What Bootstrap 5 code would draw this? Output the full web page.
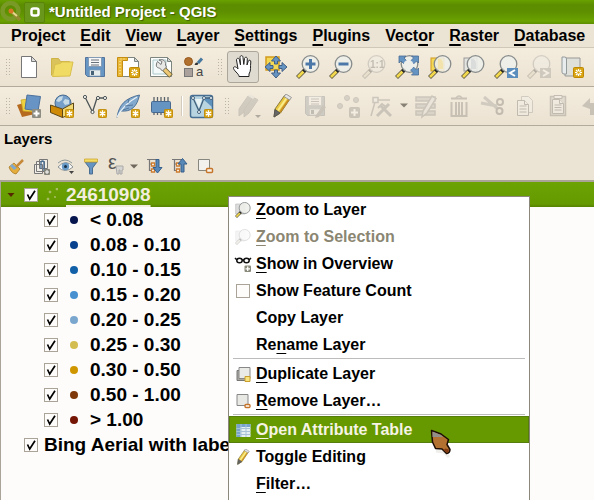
<!DOCTYPE html>
<html lang="en">
<head>
<meta charset="utf-8">
<meta name="viewport" content="width=device-width, initial-scale=1">
<title>*Untitled Project - QGIS</title>
<link rel="stylesheet" href="https://cdn.jsdelivr.net/npm/bootstrap@5.3.0/dist/css/bootstrap.min.css">
<style>
  body { font-family: "Liberation Sans", Arial, sans-serif; font-weight: 700; font-size: 16px; line-height: 20px; color: #000; background: #ebe3d3; }
  u { text-decoration-skip-ink: none; text-decoration-thickness: 1px; text-underline-offset: 3px; }
  button { font: inherit; color: inherit; background: none; border: 0; }
  .titlebar { height: 24px; background: linear-gradient(#6aa200 0, #5c8c00 5px, #5e8f00 12px, #6ba300 21px, #5d8c00 24px); color: #fff; font-size: 15px; text-shadow: 1px 1px 1px #3d5c00; }
  .winbtn { width: 21px; height: 21px; background: #69971b; border: 1px solid #5a8407; border-radius: 2px; margin-left: 1px; }
  .menubar { height: 24px; padding-left: 11px; gap: 15px; border-bottom: 1px solid #cfc8b9; }
  .menubar u { text-decoration-thickness: 2px; }
  .toolstrip { height: 39px; background: linear-gradient(#f4ecdd, #ebe2d2); border-bottom: 1px solid #b2aa9c; }
  .strip-b { padding-bottom: 1px; }
  .tool { width: 33px; height: 32px; padding: 0 5px 0 4px; flex: none; }
  .tool.pressed { padding-left: 3px; padding-right: 4px; width: 32px; margin-left: 1px; background: #dfdbd0; border: 1px solid #aaa69a; border-radius: 3px; }
  .tool svg { display: block; overflow: visible; }
  .grip { flex: none; height: 18px; width: 5px; margin: 0 3px 0 5px; background: radial-gradient(circle, #bbb3a5 1px, transparent 1px) 0 0 / 3px 3px; }
  .grip.mid { margin: 0 4px 0 6px; }
  .divider { flex: none; width: 2px; height: 20px; margin: 0 2px 0 3px; background: #d3cbbc; border-right: 1px solid #fff; }
  .arrow { flex: none; width: 12px; padding: 0; }
  .arrow svg { display: block; margin: 0 auto; }
  .off { opacity: .3; filter: grayscale(.8); }
  .panel-name { font-size: 15px; line-height: 20px; padding: 3px 4px 2px; margin: 0; font-weight: 700; }
  .panel-tools { height: 29px; padding-left: 7px; gap: 7px; }
  .panel-tools button { width: 18px; height: 18px; padding: 0; flex: none; }
  .panel-tools .arrow { width: 12px; margin: 0 -1px 0 -4px; padding-top: 2px; }
  .panel-tools svg { display: block; overflow: visible; }
  .tree { background: #fdfcfa; border-top: 2px solid #aaa498; border-left: 1px solid #aaa498; font-size: 19px; line-height: 25px; }
  .tree-row { height: 25px; padding-left: 43px; white-space: nowrap; }
  .tree-row.top { padding-left: 23px; gap: 6px; }
  .tree-row.picked { padding-left: 5px; color: #f2eede; background: linear-gradient(#6ca303, #659a00 22px, #558100 25px); }
  .tree-row.picked u { text-decoration-thickness: 2px; text-underline-offset: 4px; }
  .tick { appearance: none; -webkit-appearance: none; flex: none; width: 14px; height: 14px; margin: 0; background: #fdfcfa no-repeat center / 12px 12px; border: 1px solid #aaa498; }
  .tick:checked { background-image: url("data:image/svg+xml,%3Csvg xmlns='http://www.w3.org/2000/svg' viewBox='0 0 12 12'%3E%3Cpath d='M2.5 5.5 4.7 10 10 1.8' fill='none' stroke='%23000' stroke-width='1.7'/%3E%3C/svg%3E"); }
  .dot { flex: none; width: 8px; height: 8px; border-radius: 50%; margin: 0 12px; }
  .d1 { background: #06154e; } .d2 { background: #08418e; } .d3 { background: #1160a8; } .d4 { background: #4890cf; } .d5 { background: #7ba7cf; }
  .d6 { background: #d3bd51; } .d7 { background: #cf9600; } .d8 { background: #7f380a; } .d9 { background: #741505; }
  .context { position: absolute; left: 228px; top: 196px; bottom: -4px; width: 302px; background: #fff; border: 1px solid #8b877b; }
  .entry { height: 27px; padding: 0 6px; gap: 5px; text-align: left; white-space: nowrap; cursor: default; }
  .entry:first-child { height: 26px; }
  .entry.gone { color: #8b8672; }
  .entry.hot { color: #f6f4e4; background: #669900; outline: 1px solid #557e0c; outline-offset: -1px; }
  .entry svg, .pic { flex: none; width: 16px; height: 16px; overflow: visible; }
  .entry .tick { margin: 0 1px; }
  .rule { height: 1px; background: #bdbcba; margin: 0 4px 1px; }
  .pointer { position: absolute; left: 430px; top: 429px; }
</style>
<script src="https://cdn.jsdelivr.net/npm/bootstrap@5.3.0/dist/js/bootstrap.bundle.min.js"></script>
</head>
<body>
<svg class="d-none" aria-hidden="true">
  <symbol id="star" viewBox="0 0 10 10"><rect x=".5" y=".5" width="9" height="9" rx="1" fill="#d9a514" stroke="#bf8800"/><path d="M5 1.5v7M2 3.2l6 3.6M8 3.2 2 6.8" stroke="#fff" stroke-width="1.4"/></symbol>
  <symbol id="lens" viewBox="0 0 24 24"><path d="M9 15 1.5 22.5" stroke="#5d5843" stroke-width="4.2"/><path d="M7.5 16.5 2 22" stroke="#f2d84c" stroke-width="2.6"/><path d="M10 14 7.500 16.500" stroke="#222" stroke-width="3.500"/><circle cx="14.500" cy="9" r="8.300" fill="#eeefeb" fill-opacity=".88" stroke="#868b8b" stroke-width="1.300"/></symbol>
  <symbol id="down" viewBox="0 0 8 5"><path d="M0 .5h8L4 4.500z" fill="#6d675d"/></symbol>
  <symbol id="pencil" viewBox="0 0 24 24"><path d="M5 15 14.500 1.500 20 5 10.500 19 4 23z" fill="#e9c740" stroke="#8b7a3c"/><path d="M8 16.500 17 3.500" stroke="#f9ec8c" stroke-width="2"/><path d="M10 18 19 5" stroke="#c98c23" stroke-width="1.500"/><path d="M14 2.500 16 0 21.500 3.500 19.500 6z" fill="#e4e4e4" stroke="#888" stroke-width=".8"/><path d="M5 15.500 10 19 4 23z" fill="#666" stroke="#555"/></symbol>
  <symbol id="floppy" viewBox="0 0 24 24"><path d="M2.500 2.500h19v19H4.500l-2-2z" fill="#6796c4" stroke="#54749b"/><path d="M5.500 2.500h13v9h-13z" fill="#f7f7f7" stroke="#839bb5"/><path d="M8 5h8M8 7.500h8M8 10h8" stroke="#69717a"/><path d="M6.500 15h11v6h-11z" fill="#e6ecec" stroke="#839bb5" stroke-width=".7"/><path d="M8 16h3v4H8z" fill="#476277"/></symbol>
</svg>
<div class="vh-100 d-flex flex-column overflow-hidden position-relative">
  <header class="titlebar d-flex align-items-center flex-shrink-0">
    <svg width="23" height="24" viewBox="0 0 23 24" aria-hidden="true"><circle cx="10.500" cy="11" r="8" fill="none" stroke="#7a9a27" stroke-width="4.500"/><path d="m12 12 8 8" stroke="#928b30" stroke-width="3.500"/><path d="m11 11 6 5" stroke="#e3d98d" stroke-width="2"/><circle cx="11" cy="11" r="2.500" fill="#d77924"/></svg>
    <button type="button" class="winbtn p-0 d-flex align-items-center justify-content-center" aria-label="Window menu"><svg width="12" height="12" viewBox="0 0 12 12"><rect x="2.500" y="2.500" width="7" height="7" rx="2" fill="none" stroke="#fff" stroke-width="2.500"/></svg></button>
    <span class="ms-1 text-nowrap">*Untitled Project - QGIS</span>
  </header>
  <nav class="menubar d-flex align-items-center flex-shrink-0" aria-label="Main menu">
    <button type="button" class="p-0">Pro<u>j</u>ect</button><button type="button" class="p-0"><u>E</u>dit</button><button type="button" class="p-0"><u>V</u>iew</button><button type="button" class="p-0"><u>L</u>ayer</button><button type="button" class="p-0"><u>S</u>ettings</button><button type="button" class="p-0"><u>P</u>lugins</button><button type="button" class="p-0">Vect<u>o</u>r</button><button type="button" class="p-0"><u>R</u>aster</button><button type="button" class="p-0"><u>D</u>atabase</button>
  </nav>

  <div class="toolstrip d-flex align-items-center flex-shrink-0" role="toolbar" aria-label="Project and navigation">
    <span class="grip"></span>
    <button type="button" class="tool" aria-label="New project"><svg width="24" height="24" viewBox="0 0 24 24"><path d="M4.500 1.500h10l5 5v16h-15z" fill="#fff" stroke="#777"/><path d="M14.500 1.500v5h5z" fill="#ddd" stroke="#777"/></svg></button>
    <button type="button" class="tool" aria-label="Open project"><svg width="24" height="24" viewBox="0 0 24 24"><path d="M1.500 20.500V3.500h7l2 3h9v3" fill="#dbc35c" stroke="#ceb347"/><path d="M2.500 21.500 5 9.500l5-1 2-1.500h11l-3 14z" fill="#f0dc65" stroke="#d9bf4c"/></svg></button>
    <button type="button" class="tool" aria-label="Save project"><svg width="24" height="24"><use href="#floppy"/></svg></button>
    <button type="button" class="tool" aria-label="New print layout"><svg width="24" height="24" viewBox="0 0 24 24"><path d="M2.500 2.500h16l4 4v15h-20z" fill="#fdfdfb" stroke="#7d8580"/><path d="M18.500 2.500v4h4z" fill="#d6d6d6" stroke="#7d8580"/><path d="M1.500 2.500h10v3h-5v16h-5z" fill="#ebb93a" stroke="#c58e12"/><path d="M4 6v14M5 3.500v1.500M8 3.500v1.500" stroke="#fff2bd" stroke-dasharray="1 2"/><rect x="13.500" y="12.500" width="10" height="10" rx="1" fill="#d9a514" stroke="#bf8800"/><path d="M18.500 14v7M15 17.500h7M16 15l5 5M21 15l-5 5" stroke="#fff" stroke-width="1.200"/><circle cx="18.500" cy="17.500" r="1.300" fill="#d9a514"/></svg></button>
    <button type="button" class="tool" aria-label="Layout manager"><svg width="24" height="24" viewBox="0 0 24 24"><path d="M1.500 2.500h17l4 4v15h-21z" fill="#fdfdfb" stroke="#7d8580"/><path d="M18.500 2.500v4h4z" fill="#d6d6d6" stroke="#7d8580"/><path d="M4 5h13v14H4z" fill="#f4fafa" stroke="#a9c8ca"/><path d="m14 13 8 8" stroke="#6c6039" stroke-width="5"/><path d="m15 14 6.500 6.500" stroke="#eec875" stroke-width="3.200"/><path d="m8.500 6.500 3.500 3 1-3-3-1.500c4-1.500 7 1 6.500 5l1 2-4 4-3-3C7 13 6.500 10 8.500 6.500z" fill="#e8e8e6" stroke="#777"/></svg></button>
    <button type="button" class="tool" aria-label="Style manager"><svg width="24" height="24" viewBox="0 0 24 24"><circle cx="6.500" cy="6.500" r="4" fill="#b2702e" stroke="#95571a"/><rect x="2.500" y="13.500" width="8" height="8" fill="#aaa19c" stroke="#777"/><path d="M12.500 10c1-3 2-3 4-2l-1 2z" fill="#333"/><path d="m16 8 4-4.500" stroke="#47789f" stroke-width="3"/><text x="14" y="21" font-size="13" font-weight="400" fill="#444">a</text></svg></button>
    <span class="grip mid"></span>
    <button type="button" class="tool pressed" aria-label="Pan map" aria-pressed="true"><svg width="24" height="24" viewBox="0 0 24 24"><path d="M8 21.500c0-3-6-6-5.500-9 1-1.500 3-.5 4.500 1.500L5.500 5c0-2 2.500-2.500 3 0l1 5L9 2.500c0-2.500 3-2.500 3 0l.8 7 .7-6c.5-2 3-1.500 2.800.5L16 10l1.300-4c.7-1.500 2.800-1 2.500 1-.8 5 .7 8-1.800 12v2.500z" fill="#fff" stroke="#222" stroke-linejoin="round"/></svg></button>
    <button type="button" class="tool" aria-label="Pan to selection"><svg width="24" height="24" viewBox="0 0 24 24"><rect x="3" y="2" width="13" height="13" fill="#f4d957" stroke="#d29a1c" stroke-width="1.500"/><path d="m13 1 4.500 5h-3v3h-3V6h-3zM13 23l4.500-5h-3v-3h-3v3h-3zM2 12l5-4.500v3h3v3H7v3zM24 12l-5-4.500v3h-3v3h3v3z" fill="#6694c2" stroke="#415f84"/></svg></button>
    <button type="button" class="tool" aria-label="Zoom in"><svg width="24" height="24"><use href="#lens"/><path d="M14.500 4v10M9.500 9h10" stroke="#4b78a8" stroke-width="3"/></svg></button>
    <button type="button" class="tool" aria-label="Zoom out"><svg width="24" height="24"><use href="#lens"/><path d="M9.500 9h10" stroke="#4b78a8" stroke-width="3"/></svg></button>
    <button type="button" class="tool off" aria-label="Zoom to native resolution" disabled><svg width="24" height="24"><use href="#lens"/><text x="8" y="13" font-size="10" fill="#555">1:1</text></svg></button>
    <button type="button" class="tool" aria-label="Zoom full"><svg width="24" height="24" viewBox="0 0 24 24"><use href="#lens" width="24" height="24"/><path d="M4 1h7L9 3l3 3-3 3-3-3-2 2zM23.500 1v7l-2-2-3 3-3-3 3-3-2-2zM23.500 20v-7l-2 2-3-3-3 3 3 3-2 2z" fill="#6694c2" stroke="#496c96" stroke-width=".8"/><circle cx="13.500" cy="10" r="5" fill="#eeefeb"/></svg></button>
    <button type="button" class="tool" aria-label="Zoom to selection"><svg width="24" height="24"><rect x="3" y="3" width="13" height="13" fill="#f4d957" stroke="#d29a1c"/><use href="#lens"/><path d="M10 4q6-2 5 10h-5z" fill="#f2e3ad"/></svg></button>
    <button type="button" class="tool" aria-label="Zoom to layer"><svg width="24" height="24"><rect x="3" y="3" width="13" height="13" fill="#e3e3e0" stroke="#999"/><use href="#lens"/><path d="M10 4q6-2 5 10h-5z" fill="#d9dcda"/></svg></button>
    <button type="button" class="tool" aria-label="Zoom last"><svg width="24" height="24"><use href="#lens"/><path d="M13 13h11v10H13z" fill="#5b8dbd"/><path d="m21 15-5 3 5 3" fill="none" stroke="#fff" stroke-width="2"/></svg></button>
    <button type="button" class="tool off" aria-label="Zoom next" disabled><svg width="24" height="24"><use href="#lens"/><path d="M13 13h11v10H13z" fill="#888"/><path d="m16 15 5 3-5 3" fill="none" stroke="#fff" stroke-width="2"/></svg></button>
    <button type="button" class="tool" aria-label="New map view"><svg width="24" height="24" viewBox="0 0 24 24"><path d="M5 3h15v18H5z" fill="#dfe0d9" stroke="#999"/><path d="M2 2h2.500q2 0 2 2v15H4q-2 0-2-2z" fill="#e9ecec" stroke="#929a9a"/><rect x="13.500" y="12.500" width="10" height="10" rx="1" fill="#d9a514" stroke="#bf8800"/><path d="M18.500 14v7M15 17.500h7M16 15l5 5M21 15l-5 5" stroke="#fff" stroke-width="1.200"/><circle cx="18.500" cy="17.500" r="1.300" fill="#d9a514"/></svg></button>
  </div>

  <div class="toolstrip strip-b d-flex align-items-center flex-shrink-0" role="toolbar" aria-label="Data source and editing">
    <span class="grip"></span>
    <button type="button" class="tool" aria-label="Data source manager"><svg width="24" height="24" viewBox="0 0 24 24"><path d="m0 11 13-4 5 13-13 3z" fill="#b66a1f"/><path d="m4 6 13-2v14l-11-1z" fill="#efd03f" stroke="#c9a522" stroke-width=".7"/><path d="m10 1 13.500 1.500L21 17 8 15z" fill="#6794c4" stroke="#4c719d"/><rect x="15" y="15" width="9" height="9" rx="1" fill="#8d8d83"/><path d="M19.500 16.500v6M16.500 19.500h6" stroke="#fff" stroke-width="2"/></svg></button>
    <button type="button" class="tool" aria-label="New GeoPackage layer"><svg width="24" height="24" viewBox="0 0 24 24"><circle cx="13" cy="9" r="8" fill="#759fc8" stroke="#486b90"/><path d="M9 3l4-1-1 4-3 2-3-1zM15 5l4 1v4l-4 1-2-3z" fill="#c7dbe7"/><path d="m.5 11 12 4v8.500l-12-5z" fill="#cf8a08" stroke="#5e4717"/><path d="m12.500 15 11-6v10l-11 4.500z" fill="#f2d978" stroke="#5e4717"/><use href="#star" x="15" y="15" width="9" height="9"/></svg></button>
    <button type="button" class="tool" aria-label="New shapefile layer"><svg width="24" height="24" viewBox="0 0 24 24"><path d="m2 3 7.500 15L14 4h8" fill="none" stroke="#4d5558" stroke-width="1.300"/><g fill="#f5f5ef" stroke="#4d5558"><circle cx="2" cy="3" r="1.600"/><circle cx="9.500" cy="18" r="1.600"/><circle cx="15" cy="4" r="1.600"/><circle cx="22" cy="4" r="1.600"/></g><use href="#star" x="15" y="15" width="9" height="9"/></svg></button>
    <button type="button" class="tool" aria-label="New SpatiaLite layer"><svg width="24" height="24" viewBox="0 0 24 24"><path d="M1 23.500C3 10 10 4 23.500 1 21 13 15 18 5 17" fill="#83aace" stroke="#4d7197"/><path d="M1 23Q8 10 21 3" fill="none" stroke="#e9f2f5" stroke-width="1.200"/><path d="m9 12 8-1M12 9l1-4M7 16l6-2" stroke="#496b8f" stroke-width=".8"/><use href="#star" x="15" y="15" width="9" height="9"/></svg></button>
    <button type="button" class="tool" aria-label="New temporary layer"><svg width="24" height="24" viewBox="0 0 24 24"><path d="M5 3v18M8.500 3v18M12 3v18M15.500 3v18M19 3v18" stroke="#59646b" stroke-width="1.300"/><rect x="2.500" y="7.500" width="19" height="11" rx="1" fill="#6694c2" stroke="#47698f"/><use href="#star" x="15" y="15" width="9" height="9"/></svg></button>
    <span class="divider"></span>
    <button type="button" class="tool" aria-label="New virtual layer"><svg width="24" height="24" viewBox="0 0 24 24"><rect x="1.500" y="1.500" width="22" height="22" rx="2" fill="#b8d4e0" stroke="#476f93" stroke-width="1.500"/><path d="m14 5 9-2v10z" fill="#5f91bd"/><path d="m4 4 6 13 5-13h6" fill="none" stroke="#41617c" stroke-width="1.300"/><path d="m6 5 4 9 3-9z" fill="#ebf4f5"/><g fill="#fff" stroke="#41617c"><circle cx="4" cy="4" r="1.500"/><circle cx="10" cy="18" r="1.500"/><circle cx="15" cy="4" r="1.500"/><circle cx="22" cy="4" r="1.500"/></g><use href="#star" x="15" y="15" width="9" height="9"/></svg></button>
    <span class="grip mid me-1"></span>
    <button type="button" class="tool off" aria-label="Current edits" disabled><svg width="24" height="24" viewBox="0 0 24 24"><g fill="#8b8b80" stroke="#777"><path d="m2 15 9-13 5 3-9 13-5 4z"/><path d="m7 16 9-13 5 3-9 13-5 4z"/></g><path d="m11 2 2-2 5 3-2 2z" fill="#ddd"/><path d="M18 21h6l-3 3z" fill="#222"/></svg></button>
    <button type="button" class="tool" aria-label="Toggle editing"><svg width="24" height="24"><use href="#pencil"/></svg></button>
    <button type="button" class="tool off" aria-label="Save layer edits" disabled><svg width="24" height="24"><use href="#floppy"/><path d="m13 21 7-10 3 2-7 10-4 1z" fill="#777"/></svg></button>
    <button type="button" class="tool off" aria-label="Add point feature" disabled><svg width="24" height="24" viewBox="0 0 24 24"><g fill="#9b9b92" stroke="#777"><circle cx="4" cy="12" r="2.500"/><circle cx="11" cy="4" r="2.500"/><circle cx="20" cy="6" r="2.500"/><rect x="13.500" y="13.500" width="10" height="10" rx="1" fill="#8b7b5b"/></g><path d="M18.500 15v7M15 18.500h7" stroke="#fff" stroke-width="2"/></svg></button>
    <button type="button" class="tool off" aria-label="Vertex tool" disabled><svg width="24" height="24" viewBox="0 0 24 24"><path d="M7 6h14M6 8 2 22" stroke="#777" stroke-width="1.500"/><path d="M4 3.500h5v5H4z" fill="#eee" stroke="#777" stroke-width="1.500"/><path d="m8 22 12-12M12 12l10 10" stroke="#777" stroke-width="3"/><path d="m9 14 4-4 4 3" stroke="#777" stroke-width="2" fill="none"/></svg></button>
    <button type="button" class="arrow" aria-label="Vertex tool options"><svg width="8" height="5" opacity=".8"><use href="#down"/></svg></button>
    <button type="button" class="tool off" aria-label="Modify attributes" disabled><svg width="24" height="24" viewBox="0 0 24 24"><g fill="#aaa" stroke="#777" stroke-width="1.500"><path d="M2 3h19v4H2zM2 10h19v4H2zM2 17h19v4H2z"/><path d="m9 17 9-15 4 2.500L13 19l-5 4z" fill="#ddd"/></g></svg></button>
    <button type="button" class="tool off" aria-label="Delete selected" disabled><svg width="24" height="24" viewBox="0 0 24 24"><path d="M4.500 8v14h15V8M9 8v13M12 8v13M15 8v13M4 4.500h16" fill="none" stroke="#7d6a50" stroke-width="2"/><path d="M9 4q3-4 6 0" fill="none" stroke="#7d6a50" stroke-width="1.500"/></svg></button>
    <button type="button" class="tool off" aria-label="Cut" disabled><svg width="24" height="24" viewBox="0 0 24 24"><path d="m1 9 16 3M4 3l14 12" stroke="#888" stroke-width="3"/><circle cx="20" cy="8" r="3" fill="none" stroke="#6d5942" stroke-width="2"/><circle cx="19.500" cy="17" r="3" fill="none" stroke="#6d5942" stroke-width="2"/></svg></button>
    <button type="button" class="tool off" aria-label="Copy" disabled><svg width="24" height="24" viewBox="0 0 24 24"><g fill="#f4f4ee" stroke="#555"><path d="M8.500 2.500h7l4 4v12h-11z" stroke="#888"/><path d="M4.500 6.500h7l4 4v11h-11z"/><path d="M11.500 6.500v4h4M6.500 12h7M6.500 15h7M6.500 18h7"/></g></svg></button>
    <button type="button" class="tool off" aria-label="Paste" disabled><svg width="24" height="24" viewBox="0 0 24 24"><g fill="#eee" stroke="#555"><path d="M4.500 2.500h15v19h-15z" fill="#c9b999" stroke="#7d6a50" stroke-width="1.500"/><path d="M6.500 5.500h7l4 4v10h-11z"/><path d="M13.500 5.500v4h4M8.500 11h7M8.500 13.500h7M8.500 16h7"/><path d="M8 1.500h8v3H8z"/></g></svg></button>
    <button type="button" class="tool off" aria-label="Undo" disabled><svg width="24" height="24" viewBox="0 0 24 24"><path d="m3 12 8-8v5h12v12H11v-6z" fill="#7d7059"/></svg></button>
  </div>

  <h2 class="panel-name">Layers</h2>
  <div class="panel-tools d-flex align-items-center flex-shrink-0" role="toolbar" aria-label="Layers">
    <button type="button" aria-label="Layer styling"><svg width="18" height="18" viewBox="0 0 18 18"><path d="m2 10 5-4 6 6-4 5q-5-1-7-7z" fill="#e5ae3b" stroke="#a87924" stroke-width=".8"/><path d="m3 9 4 4 3-2-5-4z" fill="#80a9cd"/><path d="m9 10 7-7" stroke="#c58939" stroke-width="2.500"/></svg></button>
    <button type="button" aria-label="Add group"><svg width="18" height="18" viewBox="0 0 18 18"><g fill="#f0eee7" stroke="#777"><path d="M2.500 7.500h8v9h-8zM4.500 4.500h8v10h-8zM7.500 2.500h8v9h-8z"/></g><path d="M9 12V5q1.500-2 3 0v9" fill="none" stroke="#456b91" stroke-width="1.300"/><rect x="12" y="12" width="6" height="6" rx="1" fill="#85857b"/><path d="M15 13v4M13 15h4" stroke="#fff"/></svg></button>
    <button type="button" aria-label="Map themes"><svg width="18" height="18" viewBox="0 0 18 18"><path d="M1 10q8-9 15 0-8 7-15 0z" fill="#fafafa" stroke="#8c9292"/><circle cx="8.500" cy="9.500" r="3.700" fill="#6699c6"/><circle cx="8.500" cy="9.500" r="1.500" fill="#183149"/><path d="M1 6q7-6 14 0" fill="none" stroke="#8e9999"/><path d="M12 14h5l-2.500 3z" fill="#444"/></svg></button>
    <button type="button" aria-label="Filter legend"><svg width="18" height="18" viewBox="0 0 18 18"><path d="M3 5h12l-4.500 6v6h-3v-6z" fill="#6694c2" stroke="#4b6e93"/><path d="M2.500 2h13v3h-13z" fill="#f4dc63" stroke="#cba632" stroke-width=".8"/></svg></button>
    <button type="button" aria-label="Filter legend by expression"><svg width="18" height="18" viewBox="0 0 18 18"><text x="1" y="12" font-size="20" font-weight="400" fill="#555">ε</text><path d="M9 9h7v4h-1v4h-2v-4h-1v4h-2z" fill="#d5d4d0" stroke="#aaa"/></svg></button>
    <button type="button" class="arrow" aria-label="Expression filter options"><svg width="8" height="5"><use href="#down"/></svg></button>
    <button type="button" aria-label="Expand all"><svg width="18" height="18" viewBox="0 0 18 18"><path d="M1 2.500h10M3.500 3v11M4 7h2M4 13.500h2" stroke="#777" stroke-width="1.200"/><path d="M5.500 6h3v3h-3zM5.500 12h3v3h-3z" fill="#fff" stroke="#cc7b2d" stroke-width="1.300"/><path d="M10 2.500h3v8h3l-4.500 5.500L7 10.500h3z" fill="#5888b8" stroke="#365f8b"/></svg></button>
    <button type="button" aria-label="Collapse all"><svg width="18" height="18" viewBox="0 0 18 18"><path d="M1 2.500h10M3.500 3v11M4 7h2M4 13.500h2" stroke="#777" stroke-width="1.200"/><path d="M5.500 6h3v3h-3zM5.500 12h3v3h-3z" fill="#fff" stroke="#cc7b2d" stroke-width="1.300"/><path d="M10 15h3V7h3l-4.500-5.500L7 7h3z" fill="#5888b8" stroke="#365f8b"/></svg></button>
    <button type="button" aria-label="Remove layer"><svg width="18" height="18" viewBox="0 0 18 18"><path d="M2.500 2.500h11v11h-11z" fill="#f2f1ed" stroke="#878780"/><rect x="10.500" y="11.500" width="6" height="4" rx="1" fill="#f8f4ed" stroke="#c6752b" stroke-width="1.500"/></svg></button>
  </div>

  <main class="tree flex-grow-1">
    <div class="tree-row picked d-flex align-items-center">
      <svg class="me-2" width="10" height="6" viewBox="0 0 10 6" aria-hidden="true"><path d="M1.500 1h7L5 5z" fill="#552800"/></svg>
      <input class="tick" type="checkbox" id="lay0" checked>
      <svg class="mx-2" width="12" height="14" viewBox="0 0 12 14" aria-hidden="true"><g fill="#86b13b" stroke="#d0cf9c" stroke-width=".6"><circle cx="2" cy="11" r="1"/><circle cx="4" cy="4" r="1"/><circle cx="11" cy="1" r="1"/><circle cx="9" cy="9" r=".6"/></g></svg>
      <label for="lay0"><u>24610908</u></label>
    </div>
    <div class="tree-row d-flex align-items-center"><input class="tick" type="checkbox" id="c1" checked><span class="dot d1"></span><label for="c1">&lt; 0.08</label></div>
    <div class="tree-row d-flex align-items-center"><input class="tick" type="checkbox" id="c2" checked><span class="dot d2"></span><label for="c2">0.08 - 0.10</label></div>
    <div class="tree-row d-flex align-items-center"><input class="tick" type="checkbox" id="c3" checked><span class="dot d3"></span><label for="c3">0.10 - 0.15</label></div>
    <div class="tree-row d-flex align-items-center"><input class="tick" type="checkbox" id="c4" checked><span class="dot d4"></span><label for="c4">0.15 - 0.20</label></div>
    <div class="tree-row d-flex align-items-center"><input class="tick" type="checkbox" id="c5" checked><span class="dot d5"></span><label for="c5">0.20 - 0.25</label></div>
    <div class="tree-row d-flex align-items-center"><input class="tick" type="checkbox" id="c6" checked><span class="dot d6"></span><label for="c6">0.25 - 0.30</label></div>
    <div class="tree-row d-flex align-items-center"><input class="tick" type="checkbox" id="c7" checked><span class="dot d7"></span><label for="c7">0.30 - 0.50</label></div>
    <div class="tree-row d-flex align-items-center"><input class="tick" type="checkbox" id="c8" checked><span class="dot d8"></span><label for="c8">0.50 - 1.00</label></div>
    <div class="tree-row d-flex align-items-center"><input class="tick" type="checkbox" id="c9" checked><span class="dot d9"></span><label for="c9">&gt; 1.00</label></div>
    <div class="tree-row top d-flex align-items-center"><input class="tick" type="checkbox" id="lay1" checked><label for="lay1">Bing Aerial with labels</label></div>
  </main>

  <div class="context" role="menu">
    <button type="button" role="menuitem" class="entry w-100 d-flex align-items-center"><svg viewBox="0 0 24 24"><path d="M1 3h14v15H1z" fill="#ddd" stroke="#bbb"/><use href="#lens" width="24" height="24"/></svg><span><u>Z</u>oom to Layer</span></button>
    <button type="button" role="menuitem" class="entry gone w-100 d-flex align-items-center" disabled><svg class="off" viewBox="0 0 24 24"><path d="M1 3h14v15H1z" fill="#ddd" stroke="#bbb"/><use href="#lens" width="24" height="24"/></svg><span><u>Z</u>oom to Selection</span></button>
    <button type="button" role="menuitem" class="entry w-100 d-flex align-items-center"><svg viewBox="0 0 15 16"><g fill="#fff" stroke="#111" stroke-width="1.500"><ellipse cx="4" cy="4.500" rx="2.700" ry="2.300"/><ellipse cx="11" cy="4.500" rx="2.700" ry="2.300"/><path d="M6.500 4h2M1.500 4-.5 2M13.500 4l2-2"/></g><rect x="9" y="9.500" width="6.500" height="6.500" rx="1" fill="#8a8a7c"/><path d="M12.200 10.500v4.500M10 12.800h4.500" stroke="#fff" stroke-width="1.300"/></svg><span><u>S</u>how in Overview</span></button>
    <div class="entry d-flex align-items-center"><input class="tick" type="checkbox" id="count"><label class="flex-grow-1" for="count">Show Feature Count</label></div>
    <button type="button" role="menuitem" class="entry w-100 d-flex align-items-center"><span class="pic"></span><span>Copy Layer</span></button>
    <button type="button" role="menuitem" class="entry w-100 d-flex align-items-center"><span class="pic"></span><span>Re<u>n</u>ame Layer</span></button>
    <div class="rule" role="separator"></div>
    <button type="button" role="menuitem" class="entry w-100 d-flex align-items-center"><svg viewBox="0 0 15 16"><path d="M1.500 4.500h11v10h-11z" fill="#aaa79f" stroke="#777"/><path d="M3.500 1.500h11v11h-11z" fill="#eaeae6" stroke="#888"/><path d="M9.500 10.500h5v5h-5z" fill="#f8e47e" stroke="#c99e2c"/></svg><span><u>D</u>uplicate Layer</span></button>
    <button type="button" role="menuitem" class="entry w-100 d-flex align-items-center"><svg viewBox="0 0 15 16"><path d="M1.500 1.500h11v11h-11z" fill="#e8e8e4" stroke="#888"/><rect x="9.500" y="11.500" width="5" height="3" rx="1" fill="#fff" stroke="#c6752b" stroke-width="1.400"/></svg><span><u>R</u>emove Layer…</span></button>
    <div class="rule" role="separator"></div>
    <button type="button" role="menuitem" class="entry hot w-100 d-flex align-items-center"><svg viewBox="0 0 15 16"><path d="M1 2h14v13H1z" fill="#e6eff2"/><path d="M1 2h14v3H1zM1 5h4v10H1z" fill="#77a3cc"/><path d="M1 6.500h14M1 9.500h14M1 12.500h14M5.500 2v13M10.500 2v13" stroke="#a8c3d7"/></svg><span><u>O</u>pen Attribute Table</span></button>
    <button type="button" role="menuitem" class="entry w-100 d-flex align-items-center"><svg viewBox="0 0 24 24"><use href="#pencil" width="24" height="24"/></svg><span>Toggle Editing</span></button>
    <button type="button" role="menuitem" class="entry w-100 d-flex align-items-center"><span class="pic"></span><span><u>F</u>ilter…</span></button>
  </div>

  <svg class="pointer" width="24" height="30" viewBox="0 0 24 30" aria-hidden="true"><path d="m6 22 8 1 5 5" fill="none" stroke="#efeeea" stroke-width="3"/><path d="M1.500 1.500 11 5l7.500 5.500-1.500 5 3 5q0 3.500-3.500 4L12 20l-6.500-.5-3-6.500z" fill="#b27130" stroke="#1c0d05" stroke-width="1.500" stroke-linejoin="round"/><path d="M2.500 2.500 11 6l2 2H2.500z" fill="#928f8a"/><path d="m15.500 19.500 3.500 1q0 2.500-2.500 3l-3-2.500z" fill="#833a10"/></svg>
</div>
</body>
</html>
